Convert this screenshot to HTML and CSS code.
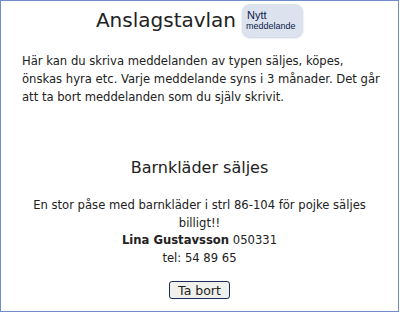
FILE: index.html
```html
<!DOCTYPE html>
<html lang="sv">
<head>
<meta charset="utf-8">
<link rel="stylesheet" href="styles.css">
</head>
<body>
<div class="frame">
  <div class="header">
    <h1 class="title">Anslagstavlan</h1>
    <button class="new-btn"><span class="nb1">Nytt</span><span class="nb2">meddelande</span></button>
  </div>
  <p class="intro">Här kan du skriva meddelanden av typen säljes, köpes, önskas hyra etc. Varje meddelande syns i 3 månader. Det går att ta bort meddelanden som du själv skrivit.</p>
  <div class="post">
    <h2 class="post-title">Barnkläder säljes</h2>
    <p class="post-body">En stor påse med barnkläder i strl 86-104 för pojke säljes billigt!!<br><b>Lina Gustavsson</b> 050331<br>tel: 54 89 65</p>
    <button class="del">Ta bort</button>
  </div>
</div>
</body>
</html>
```

FILE: styles.css
```css
html, body { margin: 0; padding: 0; background: #fff; }
body { font-family: "DejaVu Sans Condensed", "DejaVu Sans", Verdana, sans-serif; color: #222; }
.frame {
  width: 397px; height: 310px;
  border: 1px solid #6f8ccb;
  box-sizing: content-box;
  overflow: hidden;
}
.header {
  display: flex; align-items: center; justify-content: center;
  gap: 6px; padding-top: 2px; height: 35px;
}
.title {
  margin: 0 0 2px 0; font-family: "DejaVu Sans", Verdana, sans-serif;
  font-weight: normal; font-size: 20px; color: #222;
}
.new-btn {
  border: none; background: #dde2ef; border-radius: 8px;
  width: 61px; height: 33px; padding: 2px 4px;
  display: flex; flex-direction: column; align-items: flex-start; justify-content: center;
  font-family: "Liberation Sans", Arial, sans-serif; color: #0c1a48;
  box-shadow: 0 1px 2px #c8cde0;
}
.nb1 { font-size: 11px; line-height: 12px; padding-left: 1px; }
.nb2 { font-size: 9px; line-height: 11px; }
.intro {
  margin: 14px 18px 0 21px; font-size: 12.9px; line-height: 18px;
}
.post { text-align: center; padding: 0 21px; }
.post-title {
  margin: 52px 0 0 0; font-family: "DejaVu Sans", Verdana, sans-serif;
  font-weight: normal; font-size: 16px; line-height: 20px;
}
.post-body { margin: 18px 0 0 0; font-size: 12.9px; line-height: 17.5px; }
.del {
  margin-top: 15px;
  font-family: "DejaVu Sans", Verdana, sans-serif; font-size: 12.5px;
  color: #222; background: #f0f0ec;
  border: 1px solid #1c2c5c; border-radius: 3px;
  padding: 0 8px; height: 18px; line-height: 15px;
}
```
